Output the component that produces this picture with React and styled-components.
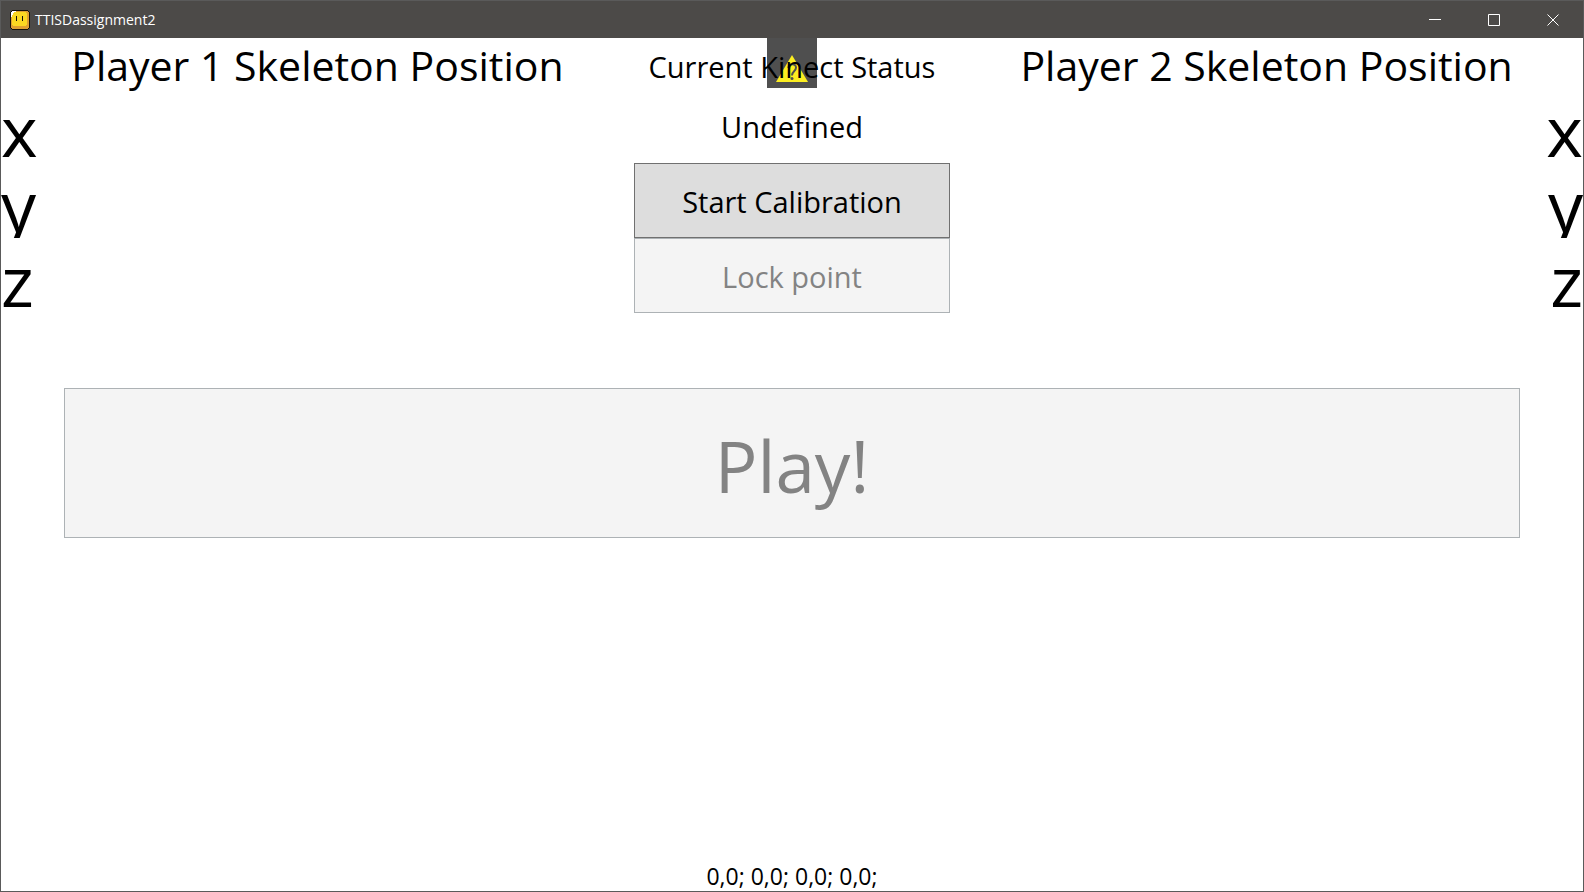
import React from "react";
import styled, { createGlobalStyle } from "styled-components";

const GlobalStyle = createGlobalStyle`
  *, *::before, *::after { box-sizing: border-box; }
  body {
    margin: 0;
    background: #fff;
    color: #000;
    font-family: "Segoe UI", "Open Sans", "Noto Sans", sans-serif;
  }
`;

const Window = styled.div`
  display: flex;
  flex-direction: column;
  min-height: 100vh;
  border: 1px solid #5a5a5a;
`;

const TitleBar = styled.header`
  display: flex;
  align-items: center;
  height: 37px;
  padding: 0 1px 0 9px;
  background: #4c4a48;
  color: #fff;
`;

const AppTitle = styled.h1`
  flex: 1;
  margin: 0 0 0 5px;
  font-size: 14px;
  line-height: 20px;
  font-weight: 400;
`;

const CaptionButton = styled.button`
  display: flex;
  align-items: center;
  justify-content: center;
  width: 59px;
  height: 36px;
  padding: 0;
  border: 0;
  background: transparent;
  color: #fff;
`;

const Content = styled.main`
  flex: 1;
  display: flex;
  flex-direction: column;
`;

const Columns = styled.div`
  display: grid;
  grid-template-columns: 2fr 1fr 2fr;
`;

const PlayerPanel = styled.section`
  text-align: ${(p) => p.$side};
`;

const PlayerHeading = styled.h2`
  height: 75px;
  margin: 0;
  font-size: 41px;
  line-height: 54px;
  font-weight: 400;
  text-align: center;
  white-space: nowrap;
`;

const Axis = styled.div`
  height: 50px;
  margin-bottom: 25px;
  overflow: hidden;
  font-size: 70px;
  line-height: 34px;
`;

const KinectPanel = styled.section`
  position: relative;
  display: flex;
  flex-direction: column;
  text-align: center;
`;

const SensorBadge = styled.div`
  position: absolute;
  top: 0;
  left: 50%;
  width: 50px;
  height: 50px;
  margin-left: -25px;
  background: #4f4f4f;
`;

const StatusGroup = styled.div`
  position: relative;
  height: 125px;
`;

const StatusLine = styled.p`
  height: 60px;
  margin: 0;
  font-size: 29px;
  line-height: 58px;
  white-space: nowrap;
`;

const ActionButton = styled.button`
  height: ${(p) => (p.$large ? 150 : 75)}px;
  margin: ${(p) => (p.$large ? "50px 4% 0" : "0")};
  padding: ${(p) => (p.$large ? 6 : 2)}px 0 0;
  border: 1px solid #707070;
  background: #ddd;
  color: #000;
  font-family: inherit;
  font-size: ${(p) => (p.$large ? 71 : 29)}px;
  line-height: ${(p) => (p.$large ? 96 : 40)}px;

  &:disabled {
    border-color: #adb2b5;
    background: #f4f4f4;
    color: #838383;
  }
`;

const Coordinates = styled.output`
  margin-top: auto;
  font-size: 23px;
  line-height: 30px;
  text-align: center;
`;

function AppIcon() {
  return (
    <svg width="20" height="20" viewBox="0 0 20 20" shapeRendering="crispEdges" aria-hidden="true">
      <path d="M2 0h16v1h1v1h1v16h-1v1h-1v1H2v-1H1v-1H0V2h1V1h1z" fill="#16120c" />
      <path d="M2 1h16v1h1v16h-1v1H2v-1H1V2h1z" fill="#e0a030" />
      <path d="M2 2h14v1h1v12h-1v1H3v-1H2z" fill="#fcd822" />
      <path d="M2 1h4v1H4v1H3v2H2v2H1V2h1z" fill="#fff" />
      <path d="M6 6h1v5H6zM12 6h1v5h-1z" fill="#16120c" />
    </svg>
  );
}

function SensorIcon() {
  return (
    <svg width="50" height="50" viewBox="0 0 50 50" aria-hidden="true">
      <path d="M25 17L41 44H9z" fill="#fcee21" />
      <path d="M21.500 30c0-5 7.500-5 7.500-.5 0 4-4 3.500-4 8" fill="none" stroke="#4f4f4f" strokeWidth="2" />
      <circle cx="25" cy="40.500" r="1.500" fill="#4f4f4f" />
    </svg>
  );
}

function CaptionIcon({ d }) {
  return (
    <svg width="12" height="12" viewBox="0 0 12 12" fill="none" stroke="currentColor" aria-hidden="true">
      <path d={d} />
    </svg>
  );
}

const captionButtons = [
  ["Minimize", "M0 5.500h12"],
  ["Maximize", "M.5.5h11v11H.5z"],
  ["Close", "M.5.5l11 11M11.500.5l-11 11"],
];

function Player({ number, side }) {
  return (
    <PlayerPanel $side={side}>
      <PlayerHeading>Player {number} Skeleton Position</PlayerHeading>
      <Axis>x</Axis>
      <Axis>y</Axis>
      <Axis>z</Axis>
    </PlayerPanel>
  );
}

export default function App() {
  return (
    <>
      <GlobalStyle />
      <Window>
        <TitleBar>
          <AppIcon />
          <AppTitle>TTISDassignment2</AppTitle>
          {captionButtons.map(([label, d]) => (
            <CaptionButton key={label} type="button" aria-label={label}>
              <CaptionIcon d={d} />
            </CaptionButton>
          ))}
        </TitleBar>
        <Content>
          <Columns>
            <Player number={1} side="left" />
            <KinectPanel>
              <SensorBadge>
                <SensorIcon />
              </SensorBadge>
              <StatusGroup>
                <StatusLine>Current Kinect Status</StatusLine>
                <StatusLine>Undefined</StatusLine>
              </StatusGroup>
              <ActionButton type="button">Start Calibration</ActionButton>
              <ActionButton type="button" disabled>Lock point</ActionButton>
            </KinectPanel>
            <Player number={2} side="right" />
          </Columns>
          <ActionButton type="button" $large disabled>Play!</ActionButton>
          <Coordinates>0,0; 0,0; 0,0; 0,0;</Coordinates>
        </Content>
      </Window>
    </>
  );
}
